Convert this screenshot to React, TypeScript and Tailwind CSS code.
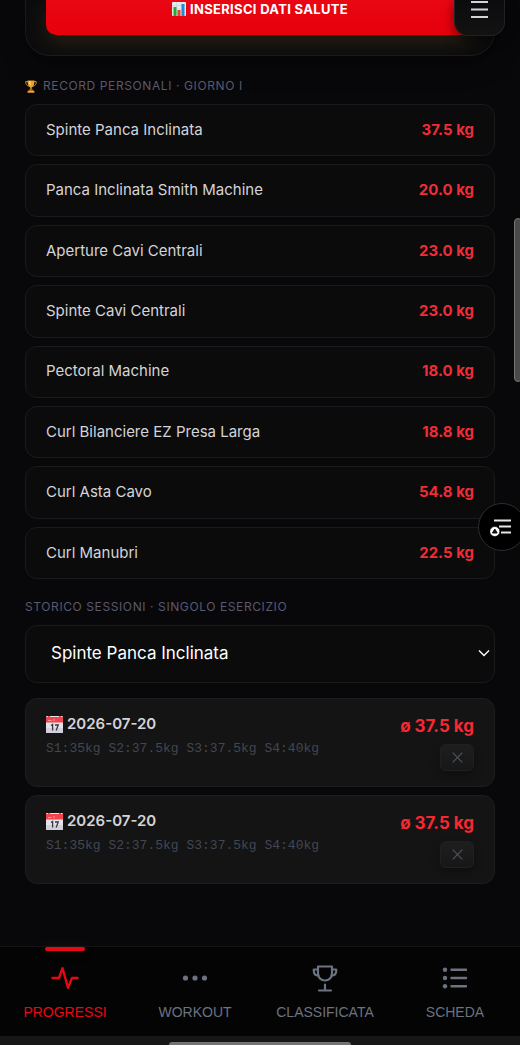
import { useState } from 'react';
import type { ReactNode } from 'react';

const RECORDS = [
  { name: 'Spinte Panca Inclinata', kg: '37.5' },
  { name: 'Panca Inclinata Smith Machine', kg: '20.0' },
  { name: 'Aperture Cavi Centrali', kg: '23.0' },
  { name: 'Spinte Cavi Centrali', kg: '23.0' },
  { name: 'Pectoral Machine', kg: '18.0' },
  { name: 'Curl Bilanciere EZ Presa Larga', kg: '18.8' },
  { name: 'Curl Asta Cavo', kg: '54.8' },
  { name: 'Curl Manubri', kg: '22.5' },
];

const SESSIONS = [
  { id: 1, date: '2026-07-20', sets: 'S1:35kg S2:37.5kg S3:37.5kg S4:40kg', avg: '37.5' },
  { id: 2, date: '2026-07-20', sets: 'S1:35kg S2:37.5kg S3:37.5kg S4:40kg', avg: '37.5' },
];

function ChartIcon() {
  return (
    <svg width="14" height="14" viewBox="0 0 14 14" aria-hidden="true">
      <rect width="14" height="14" rx="1" fill="#e6edf0" />
      <path d="M0 3.5h14M0 7h14M0 10.5h14M4.7 0v14M9.3 0v14" stroke="#b9c8d0" strokeWidth="0.5" />
      <rect x="1.5" y="5" width="3" height="9" fill="#2fa52d" />
      <rect x="5.5" y="8" width="3" height="6" fill="#e2452f" />
      <rect x="9.5" y="2" width="3" height="12" fill="#2387dd" />
    </svg>
  );
}

function CupIcon() {
  return (
    <svg width="12" height="13" viewBox="0 0 12 13" aria-hidden="true">
      <path d="M3 1.6H.7c0 2.7 1 4.2 3.2 4.5M9 1.6h2.3c0 2.7-1 4.2-3.2 4.5" fill="none" stroke="#d18a22" />
      <path d="M2.5.5h7c0 3.8-.9 6.4-2.8 7v2.2H5.3V7.5C3.4 6.9 2.5 4.3 2.5.5z" fill="#e9a02c" />
      <path d="M4 1.3h1.6v4.5C4.5 5 4 3.5 4 1.3z" fill="#ffe08a" />
      <path d="M4 9.5h4l.8 1.5H3.2z" fill="#b9701a" />
      <rect x="2.5" y="11" width="7" height="1.7" rx=".5" fill="#e5a546" />
    </svg>
  );
}

function CalendarIcon() {
  return (
    <svg width="17" height="17" viewBox="0 0 17 17" aria-hidden="true">
      <rect width="17" height="17" rx="1" fill="#e3e2ea" />
      <path d="M0 12h17v4a1 1 0 0 1-1 1H1a1 1 0 0 1-1-1z" fill="#d2d0de" />
      <path d="M0 1h2V0h2v1h9V0h2v1h2v5.5H0z" fill="#f0454d" />
      <path d="M2 4.5h3.5M7 4h2" stroke="#ff9b9f" />
      <path d="M5 9.5l1.6-1v6M9 9h3.2l-2 5.5" fill="none" stroke="#38383d" strokeWidth="1.3" />
    </svg>
  );
}

const NAV: { label: string; icon: ReactNode }[] = [
  {
    label: 'PROGRESSI',
    icon: <path d="M1.5 14H8l3.5-9.8 5.5 19.6L21 14h5.5" />,
  },
  {
    label: 'WORKOUT',
    icon: (
      <g fill="currentColor" stroke="none">
        <circle cx="4.5" cy="14" r="2.6" />
        <circle cx="14" cy="14" r="2.6" />
        <circle cx="23.5" cy="14" r="2.6" />
      </g>
    ),
  },
  {
    label: 'CLASSIFICATA',
    icon: (
      <g strokeWidth="2.2">
        <path d="M7 2.5h14v7c0 4-3 7-7 7s-7-3-7-7z" />
        <path d="M7 5.500H2.800v1.500c0 3 1.700 4.500 4.700 4.500M21 5.500h4.200v1.500c0 3-1.700 4.500-4.700 4.500M14 20.500v6M8 26.500h12" />
      </g>
    ),
  },
  {
    label: 'SCHEDA',
    icon: (
      <g>
        <path d="M10.5 5.7H25M10.5 14H25M10.5 22.3H25" />
        <g fill="currentColor" stroke="none">
          <circle cx="4" cy="5.7" r="2.2" />
          <circle cx="4" cy="14" r="2.2" />
          <circle cx="4" cy="22.3" r="2.2" />
        </g>
      </g>
    ),
  },
];

export default function App() {
  const [exercise, setExercise] = useState(RECORDS[0].name);
  const [active, setActive] = useState('PROGRESSI');

  return (
    <div className="relative flex min-h-screen flex-col overflow-x-hidden bg-[#08080b] font-['Inter',sans-serif] text-[#d4d4d8]">
      <main className="px-[25px] pb-8">
        <section className="rounded-b-[24px] border border-t-0 border-[#1b1b1d] bg-[#0c0c0d] px-5 pb-5 shadow-[0_8px_24px_rgba(0,0,0,0.35)]">
          <button className="flex w-full items-start justify-center gap-1 rounded-b-[10px] bg-linear-to-b from-[#e80713] to-[#e6000a] pb-[17px] text-[13px] leading-[18px] font-bold tracking-wide text-white shadow-[0_8px_20px_rgba(80,60,25,0.4)]">
            <span className="mt-0.5"><ChartIcon /></span>
            INSERISCI DATI SALUTE
          </button>
        </section>

        <h2 className="mt-5 flex items-center gap-1.5 text-xs leading-5 tracking-wider text-[#5b596c]">
          <CupIcon />
          RECORD PERSONALI · GIORNO I
        </h2>
        <ul className="mt-2 grid min-h-[475px] auto-rows-fr gap-2">
          {RECORDS.map((r) => (
            <li key={r.name} className="flex items-center justify-between rounded-xl border border-[#1a1a1c] bg-[#0b0b0b] px-5">
              <span className="text-[15px]">{r.name}</span>
              <span className="text-[15px] font-bold text-[#f02d37]">{r.kg} kg</span>
            </li>
          ))}
        </ul>

        <label htmlFor="exercise" className="mt-[18px] block text-xs leading-5 tracking-wider text-[#5b596c]">
          STORICO SESSIONI · SINGOLO ESERCIZIO
        </label>
        <div className="relative mt-2">
          <select
            id="exercise"
            value={exercise}
            onChange={(e) => setExercise(e.target.value)}
            className="block h-[58px] w-full appearance-none rounded-xl border border-[#1a1a1c] bg-[#0b0b0b] px-[25px] text-[17px] text-white"
          >
            {RECORDS.map((r) => (
              <option key={r.name}>{r.name}</option>
            ))}
          </select>
          <svg className="pointer-events-none absolute top-6 right-[5px]" width="12" height="9" viewBox="0 0 12 9" fill="none" stroke="#fff" strokeWidth="1.4" aria-hidden="true">
            <path d="M1 1.5l5 5 5-5" />
          </svg>
        </div>

        <ul className="mt-[15px] space-y-2">
          {SESSIONS.map((s) => (
            <li key={s.id} className="flex justify-between rounded-xl border border-[#1d1d1f] bg-[#141414] px-5 py-[15px]">
              <div>
                <div className="flex items-center gap-1 text-[15px] leading-5 font-semibold">
                  <CalendarIcon />
                  {s.date}
                </div>
                <div className="mt-[5px] font-['Liberation_Mono',monospace] text-[13px] leading-5 text-[#414753]">{s.sets}</div>
              </div>
              <div className="flex flex-col items-end gap-1.5">
                <span className="text-[17px] leading-6 font-bold text-[#f72832]">ø {s.avg} kg</span>
                <button aria-label="Elimina sessione" className="flex h-[27px] w-[34px] items-center justify-center rounded-md border border-[#202022] bg-linear-to-b from-[#1e1e1f] to-[#171717] text-[#4b535f] shadow-[0_4px_10px_rgba(0,0,0,0.3)]">
                  <svg width="11" height="11" viewBox="0 0 11 11" stroke="currentColor" strokeWidth="1.2" aria-hidden="true">
                    <path d="M.7.7l9.6 9.6M10.3.7L.7 10.3" />
                  </svg>
                </button>
              </div>
            </li>
          ))}
        </ul>
      </main>

      <nav className="mt-auto border-t border-[#141416] bg-[#040404]">
        <div className="grid grid-cols-4">
          {NAV.map((n) => (
            <button
              key={n.label}
              onClick={() => setActive(n.label)}
              className={`relative flex flex-col items-center gap-2.5 pt-[17px] pb-3.5 font-['Liberation_Sans',sans-serif] text-sm leading-5 ${active === n.label ? 'text-[#e50914]' : 'text-[#6b7280]'}`}
            >
              {active === n.label && <span className="absolute top-0 h-1 w-10 rounded-full bg-[#e50914] shadow-[0_0_12px_rgba(120,60,30,0.3)]" />}
              <svg width="28" height="28" viewBox="0 0 28 28" fill="none" stroke="currentColor" strokeWidth="2.4" strokeLinecap="round" strokeLinejoin="round" aria-hidden="true">
                {n.icon}
              </svg>
              {n.label}
            </button>
          ))}
        </div>
        <div className="flex h-[9px] items-end justify-center bg-[#161618]">
          <div className="h-[3px] w-[35%] rounded-t-sm bg-[#737373]" />
        </div>
      </nav>

      <button aria-label="Menu" className="absolute top-0 right-[15px] flex h-9 w-[51px] justify-center rounded-b-[14px] border border-t-0 border-[#222224] bg-linear-to-b from-[#0c0c0c] to-[#121212] shadow-[0_4px_12px_rgba(0,0,0,0.5)]">
        <svg width="17" height="20" viewBox="0 0 17 20" stroke="#d1d5db" strokeWidth="2" aria-hidden="true">
          <path d="M0 2h17M0 9.5h17M0 17h17" />
        </svg>
      </button>

      <button aria-label="Indice" className="absolute top-[503px] -right-[6px] flex size-12 items-center justify-center rounded-full border border-[#2d2d2f] bg-black">
        <svg width="24" height="20" viewBox="0 0 24 20" fill="none" aria-hidden="true">
          <path d="M4 3.500h17M9 9.500h12M11 15.500h10" stroke="#e5e7e5" strokeWidth="2" />
          <circle cx="4.800" cy="14.500" r="5" fill="#fff" stroke="#000" strokeWidth=".6" />
          <path d="M4.800 12l2.400 4H2.400z" fill="#111" stroke="#111" strokeLinejoin="round" />
        </svg>
      </button>

      <div className="absolute top-[218px] -right-[2px] h-[164px] w-2 rounded-sm border border-[#737373] bg-[#4a4a4a]" />
    </div>
  );
}
